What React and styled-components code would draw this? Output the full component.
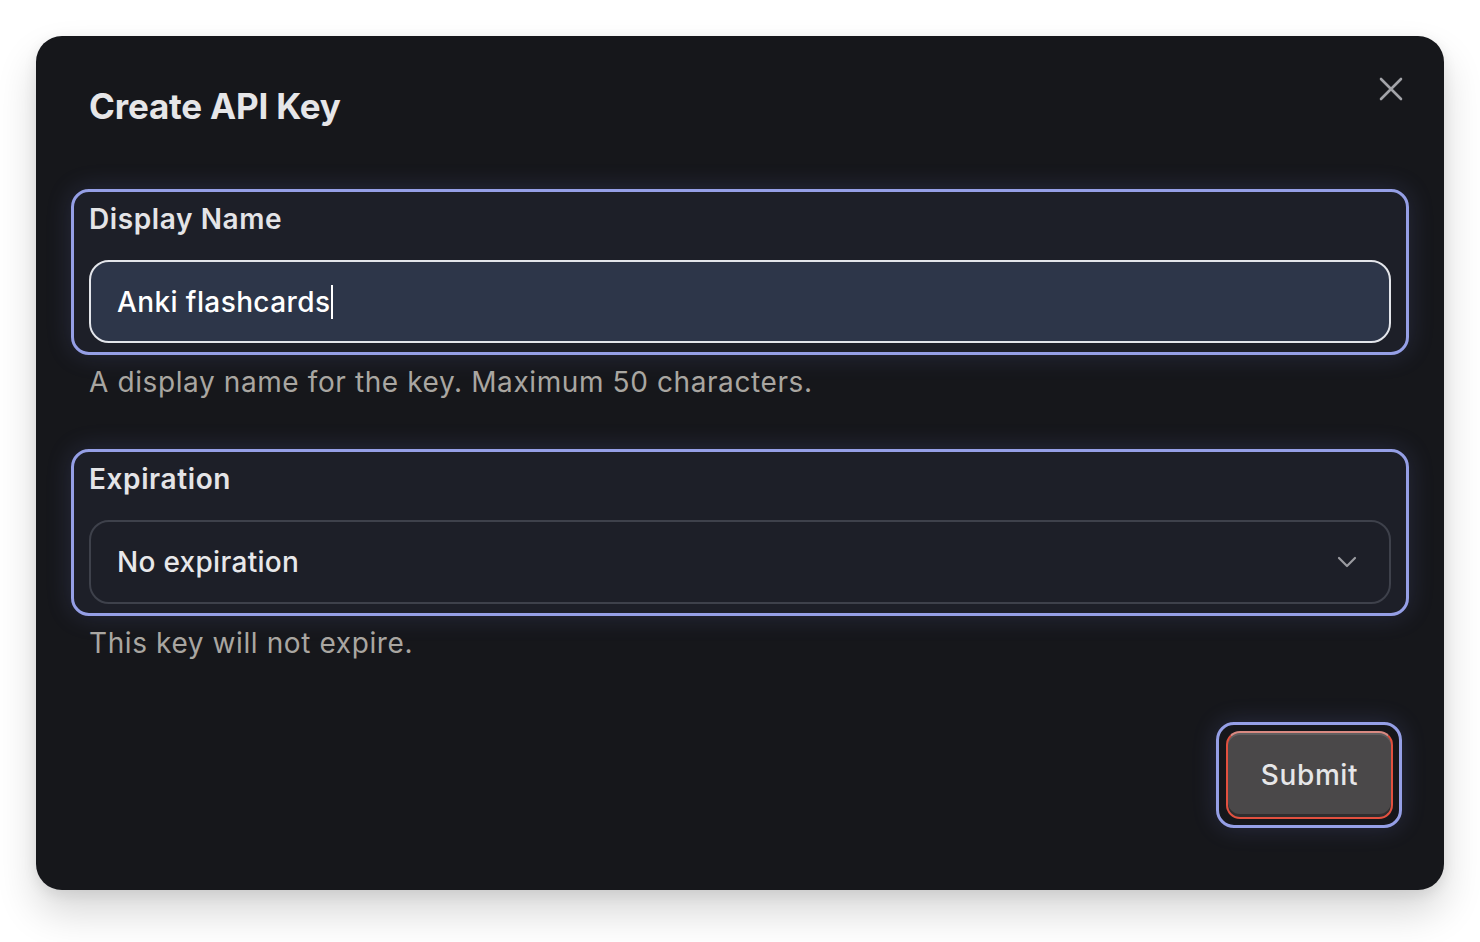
import React from "react";
import styled, { createGlobalStyle } from "styled-components";

const GlobalStyle = createGlobalStyle`
  html, body {
    margin: 0;
    padding: 0;
    background: #ffffff;
  }
  body {
    font-family: Inter, "Noto Sans", "Liberation Sans", sans-serif;
    -webkit-font-smoothing: antialiased;
  }
`;

function App() {
  return (
    <>
      <GlobalStyle />
      <Page>
        <Dialog>
          <Header>
            <Title>Create API Key</Title>
            <CloseButton aria-label="Close">
              <svg width="24" height="24" viewBox="0 0 24 24" fill="none">
                <path
                  d="M2 2 22 22M22 2 2 22"
                  stroke="currentColor"
                  strokeWidth="2.6"
                  strokeLinecap="round"
                />
              </svg>
            </CloseButton>
          </Header>

          <Field>
            <Label>Display Name</Label>
            <TextBox role="textbox">
              Anki flashcards
              <Caret />
            </TextBox>
          </Field>
          <Hint>A display name for the key. Maximum 50 characters.</Hint>

          <Field $top={51}>
            <Label>Expiration</Label>
            <SelectBox role="combobox">
              <span>No expiration</span>
              <svg width="20" height="12" viewBox="0 0 20 12" fill="none">
                <path
                  d="M2 2 10 10 18 2"
                  stroke="#9b9ca1"
                  strokeWidth="2.2"
                  strokeLinecap="round"
                  strokeLinejoin="round"
                />
              </svg>
            </SelectBox>
          </Field>
          <Hint>This key will not expire.</Hint>

          <Actions>
            <FocusRing>
              <SubmitButton>Submit</SubmitButton>
            </FocusRing>
          </Actions>
        </Dialog>
      </Page>
    </>
  );
}

export default App;

const Page = styled.div`
  width: 1480px;
  height: 942px;
  padding: 36px;
  box-sizing: border-box;
`;

const Dialog = styled.div`
  width: 1408px;
  height: 854px;
  box-sizing: border-box;
  padding: 50px 53px 0;
  background: #16171b;
  border-radius: 26px;
  box-shadow: 0 22px 40px rgba(0, 0, 0, 0.16), 0 4px 14px rgba(0, 0, 0, 0.08);
  display: flex;
  flex-direction: column;
`;

const Header = styled.div`
  display: flex;
  justify-content: space-between;
  align-items: flex-start;
  margin-bottom: 63px;
`;

const Title = styled.h2`
  margin: 0;
  font-size: 35px;
  line-height: 40px;
  font-weight: 700;
  letter-spacing: -0.2px;
  color: #e6e6e8;
`;

const CloseButton = styled.button`
  background: none;
  border: 0;
  padding: 0;
  margin: -9px -12px 0 0;
  color: #a2a3a8;
  display: flex;
  cursor: pointer;
`;

const Field = styled.div`
  margin: ${(p) => p.$top || 0}px -18px 0;
  border: 3px solid #959fe6;
  border-radius: 18px;
  background: #1d1f28;
  padding: 9px 15px 9px;
  box-shadow: 0 0 26px rgba(120, 132, 220, 0.18);
  display: flex;
  flex-direction: column;
`;

const Label = styled.div`
  font-size: 28px;
  line-height: 36px;
  font-weight: 600;
  letter-spacing: 0.6px;
  color: #e4e4e7;
  margin-bottom: 23px;
`;

const TextBox = styled.div`
  height: 83px;
  box-sizing: border-box;
  border: 2px solid #e3e5ea;
  border-radius: 20px;
  background: #2d3649;
  padding: 0 26px;
  display: flex;
  align-items: center;
  font-size: 28px;
  font-weight: 500;
  letter-spacing: 0.4px;
  color: #ffffff;
`;

const Caret = styled.span`
  display: inline-block;
  width: 2px;
  height: 34px;
  background: #ffffff;
  margin-left: 1px;
`;

const SelectBox = styled.div`
  height: 84px;
  box-sizing: border-box;
  border: 2px solid #3e414b;
  border-radius: 20px;
  background: #1d1f28;
  padding: 0 32px 0 26px;
  display: flex;
  align-items: center;
  justify-content: space-between;
  font-size: 28px;
  font-weight: 500;
  letter-spacing: 0.3px;
  color: #e8e8ea;
`;

const Hint = styled.div`
  margin-top: 11px;
  font-size: 28px;
  line-height: 32px;
  letter-spacing: 0.6px;
  color: #a9a6a1;
`;

const Actions = styled.div`
  margin-top: 63px;
  margin-right: -11px;
  display: flex;
  justify-content: flex-end;
`;

const FocusRing = styled.div`
  border: 3px solid #959fe6;
  border-radius: 18px;
  padding: 6px 6px 6px 7px;
  box-shadow: 0 0 24px rgba(120, 132, 220, 0.2);
`;

const SubmitButton = styled.button`
  width: 167px;
  height: 88px;
  box-sizing: border-box;
  border-radius: 14px;
  border: 2px solid #e2503f;
  border-top-color: #d98a82;
  background: #4a4849;
  box-shadow: inset 0 -3px 0 rgba(0, 0, 0, 0.35),
    inset 0 2px 0 rgba(255, 255, 255, 0.12);
  font-family: Inter, "Noto Sans", "Liberation Sans", sans-serif;
  font-size: 28px;
  font-weight: 500;
  letter-spacing: 0.6px;
  color: #e6e6e8;
  cursor: pointer;
`;
